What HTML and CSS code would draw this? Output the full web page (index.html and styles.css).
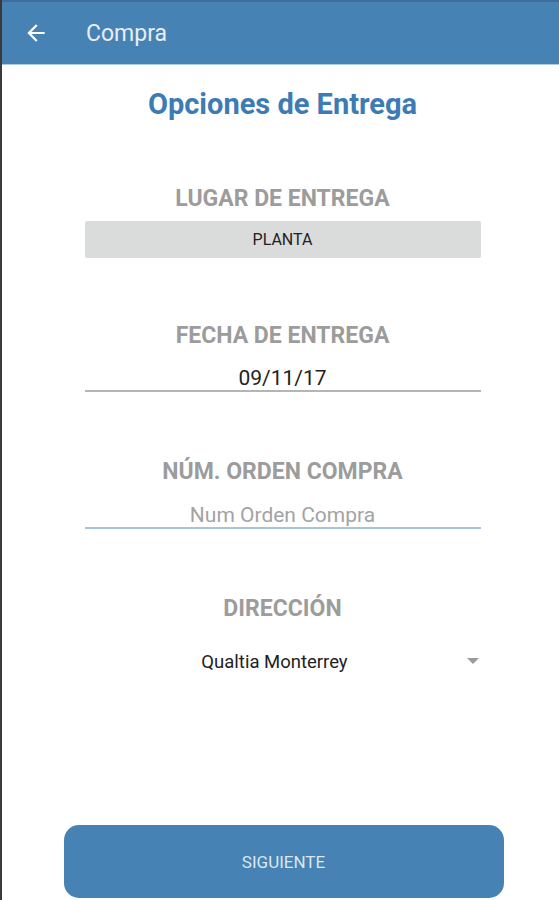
FILE: index.html
```html
<!DOCTYPE html>
<html lang="es">

<head>
    <meta charset="UTF-8">
    <meta name="viewport" content="width=device-width, initial-scale=1.0">
    <title>Compra</title>
    <link rel="stylesheet" href="styles.css">
</head>

<body>
    <div class="screen">
        <header class="app-bar">
            <svg class="back" width="26" height="26" viewBox="0 0 24 24">
                <path d="M20 11H7.83l5.59-5.59L12 4l-8 8 8 8 1.41-1.41L7.83 13H20v-2z" fill="#ffffff" />
            </svg>
            <span class="app-title">Compra</span>
        </header>

        <main class="content">
            <h1 class="page-title">Opciones de Entrega</h1>

            <section class="field">
                <h2 class="field-label">LUGAR DE ENTREGA</h2>
                <div class="pill">PLANTA</div>
            </section>

            <section class="field">
                <h2 class="field-label">FECHA DE ENTREGA</h2>
                <div class="line-input">09/11/17</div>
            </section>

            <section class="field">
                <h2 class="field-label">NÚM. ORDEN COMPRA</h2>
                <div class="line-input focused placeholder">Num Orden Compra</div>
            </section>

            <section class="field">
                <h2 class="field-label">DIRECCIÓN</h2>
                <div class="spinner">
                    <span>Qualtia Monterrey</span>
                    <span class="caret"></span>
                </div>
            </section>
        </main>

        <footer class="actions">
            <button class="next">SIGUIENTE</button>
        </footer>
    </div>
</body>

</html>
```

FILE: styles.css
```css
body {
    margin: 0;
    font-family: Roboto, "Noto Sans", sans-serif;
    background: #ffffff;
}

.screen {
    height: 900px;
    display: flex;
    flex-direction: column;
    border-left: 2px solid #3a3a3a;
    box-sizing: border-box;
    overflow: hidden;
}

.app-bar {
    height: 62px;
    flex-shrink: 0;
    display: flex;
    align-items: center;
    background: #4682b4;
    border-top: 2px solid #3d6f9c;
    border-bottom: 1px solid #a9cbe8;
    color: #e8eef5;
}

.back {
    margin-left: 21px;
}

.app-title {
    margin-left: 37px;
    font-size: 23px;
}

.content {
    flex: 1;
    display: flex;
    flex-direction: column;
    align-items: center;
    padding-left: 4px;
}

.page-title {
    margin: 22px 0 0;
    line-height: 34px;
    font-size: 29px;
    font-weight: 700;
    color: #3d7bb4;
}

.field {
    width: 396px;
    display: flex;
    flex-direction: column;
    align-items: center;
}

.field-label {
    margin: 0;
    line-height: 28px;
    font-size: 23px;
    font-weight: 700;
    color: #9c9c9c;
}

.field:nth-of-type(1) {
    margin-top: 64px;
}

.field:nth-of-type(2) {
    margin-top: 64px;
}

.field:nth-of-type(3),
.field:nth-of-type(4) {
    margin-top: 66px;
}

.pill {
    margin-top: 8px;
    width: 100%;
    height: 37px;
    line-height: 37px;
    text-align: center;
    background: #dadbdb;
    border-radius: 2px;
    font-size: 16px;
    color: #222222;
}

.line-input {
    margin-top: 16px;
    width: 100%;
    height: 24px;
    line-height: 24px;
    text-align: center;
    font-size: 21px;
    color: #222222;
    border-bottom: 2px solid #b5b5b5;
}

.line-input.placeholder {
    margin-top: 17px;
    color: #a3a3a3;
}

.line-input.focused {
    border-bottom-color: #a6c3df;
}

.spinner {
    margin-top: 27px;
    width: 100%;
    box-sizing: border-box;
    padding-right: 16px;
    position: relative;
    line-height: 24px;
    text-align: center;
    font-size: 18.5px;
    color: #222222;
}

.caret {
    position: absolute;
    right: 2px;
    top: 8px;
    width: 0;
    height: 0;
    border-left: 6px solid transparent;
    border-right: 6px solid transparent;
    border-top: 6px solid #9a9a9a;
}

.actions {
    display: flex;
    justify-content: center;
    padding-bottom: 2px;
}

.next {
    width: 440px;
    height: 73px;
    margin-left: 6px;
    border: none;
    border-radius: 15px;
    background: #4682b4;
    color: #dbe6f1;
    font-family: Roboto, "Noto Sans", sans-serif;
    font-size: 17px;
}
```
